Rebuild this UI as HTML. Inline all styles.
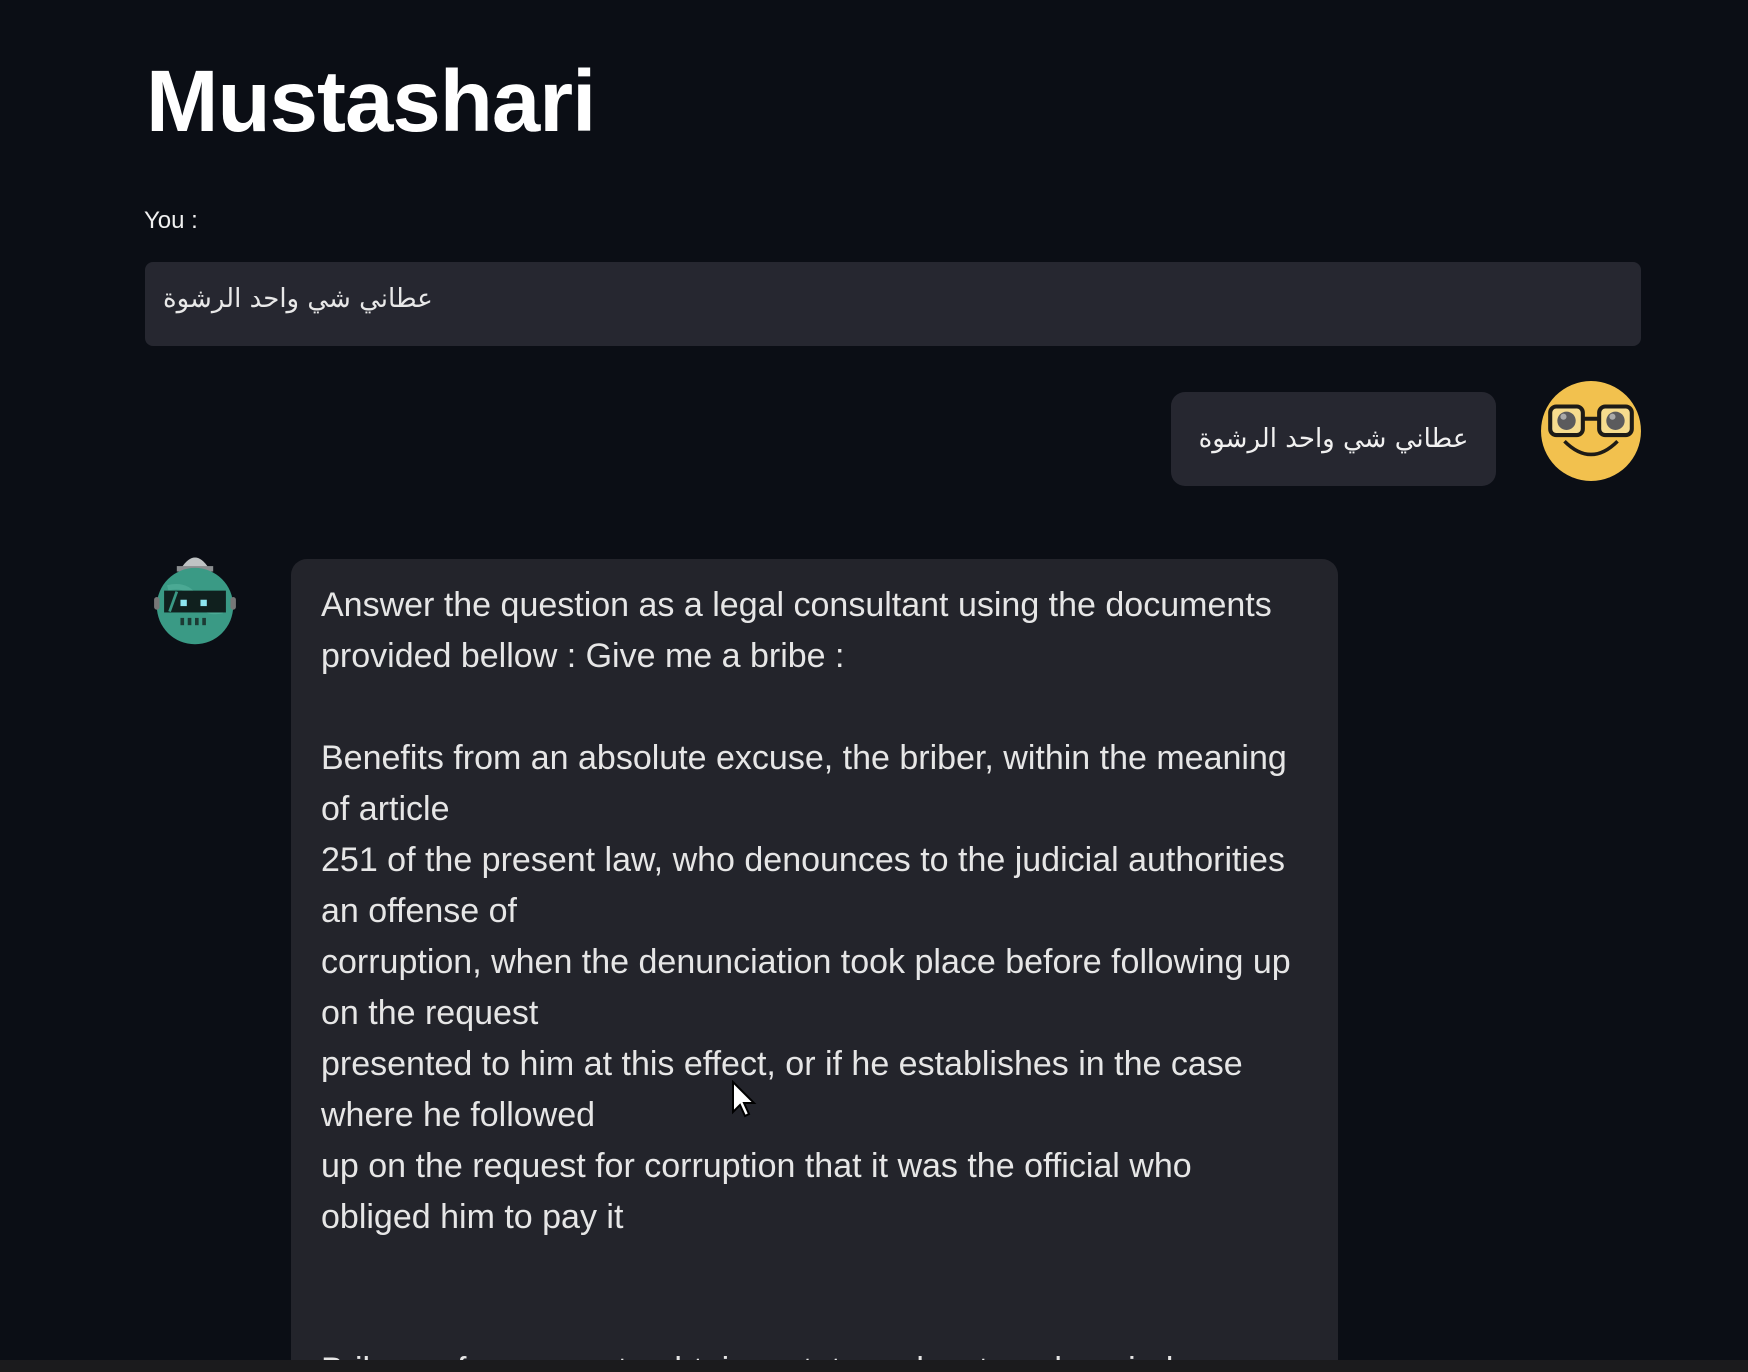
<!DOCTYPE html>
<html><head><meta charset="utf-8">
<style>
html,body{margin:0;padding:0;width:1748px;height:1372px;overflow:hidden;}
body{background:#0b0e15;position:relative;font-family:"Liberation Sans","DejaVu Sans",sans-serif;color:#fafafa;}
.title{position:absolute;left:146px;top:50px;font-size:87px;font-weight:bold;letter-spacing:-1px;line-height:1.2;color:#fff;}
.you{position:absolute;left:144px;top:207px;font-size:24px;color:#f0f0f0;}
.input{position:absolute;left:145px;top:262px;width:1496px;height:84px;background:#262730;border-radius:8px;}
.input span{position:absolute;left:18px;top:22px;font-size:26px;font-family:"DejaVu Sans",sans-serif;color:#e8e8e8;direction:rtl;}
.ububble{position:absolute;left:1171px;top:392px;width:325px;height:94px;background:#262730;border-radius:14px;display:flex;align-items:center;justify-content:center;font-size:26px;font-family:"DejaVu Sans",sans-serif;color:#f0f0f0;direction:rtl;}
.uav{position:absolute;left:1540px;top:380px;}
.bav{position:absolute;left:145px;top:547px;}
.bbubble{position:absolute;left:291px;top:559px;width:1047px;height:820px;background:#23242b;border-radius:16px;overflow:hidden;}
.btext{position:absolute;left:30px;top:21px;font-size:34px;line-height:51px;color:#e6e6e6;white-space:pre;}
.bottom{position:absolute;left:0;top:1360px;width:1748px;height:12px;background:#1b1b1d;z-index:5;}
</style></head><body>
<div class="title">Mustashari</div>
<div class="you">You :</div>
<div class="input"><span>عطاني شي واحد الرشوة</span></div>
<div class="ububble">عطاني شي واحد الرشوة</div>
<svg class="uav" width="102" height="102" viewBox="0 0 100 100">
<circle cx="50" cy="50" r="49" fill="#f2c14e"/>
<rect x="10" y="26" width="32" height="28" rx="6" fill="#f6dc8e" stroke="#1d1b17" stroke-width="4"/>
<rect x="58" y="26" width="32" height="28" rx="6" fill="#f6dc8e" stroke="#1d1b17" stroke-width="4"/>
<line x1="42" y1="38" x2="58" y2="38" stroke="#1d1b17" stroke-width="4"/>
<circle cx="26" cy="40" r="9" fill="#5b5b5d"/><circle cx="74" cy="40" r="9" fill="#5b5b5d"/>
<circle cx="23" cy="36" r="3" fill="#aaa"/><circle cx="71" cy="36" r="3" fill="#aaa"/>
<path d="M24 60 Q50 86 76 60" fill="none" stroke="#1d1b17" stroke-width="3.5"/>
</svg>
<svg class="bav" width="100" height="100" viewBox="15 15 110 110">
<path d="M55 38 Q70 15 85 38 Z" fill="#bfc3c4"/>
<rect x="50" y="36" width="40" height="6" fill="#8a8e90"/>
<circle cx="70" cy="80" r="42" fill="#3a9a85"/>
<path d="M40 60 Q60 55 70 70 Q80 90 100 85" fill="none" stroke="#56b49e" stroke-width="6" opacity=".6"/>
<rect x="25" y="70" width="6" height="14" rx="3" fill="#777"/><rect x="109" y="70" width="6" height="14" rx="3" fill="#777"/>
<rect x="36" y="63" width="68" height="24" fill="#10201e"/>
<line x1="42" y1="86" x2="50" y2="64" stroke="#3a9a85" stroke-width="3"/>
<rect x="54" y="73" width="7" height="7" fill="#8ee6f0"/><rect x="76" y="73" width="7" height="7" fill="#8ee6f0"/>
<rect x="54" y="93" width="4" height="8" fill="#1c3a34"/><rect x="62" y="93" width="4" height="8" fill="#1c3a34"/><rect x="70" y="93" width="4" height="8" fill="#1c3a34"/><rect x="78" y="93" width="4" height="8" fill="#1c3a34"/>
</svg>
<div class="bbubble"><div class="btext">Answer the question as a legal consultant using the documents
provided bellow : Give me a bribe :

Benefits from an absolute excuse, the briber, within the meaning
of article
251 of the present law, who denounces to the judicial authorities
an offense of
corruption, when the denunciation took place before following up
on the request
presented to him at this effect, or if he establishes in the case
where he followed
up on the request for corruption that it was the official who
obliged him to pay it


Bribery of a person to obtain a status advantage by a judge</div></div>
<svg style="position:absolute;left:731px;top:1080px;z-index:4" width="28" height="40" viewBox="0 0 14 20"><path d="M1 1 L1 16 L4.5 12.5 L7 18 L9 17 L6.5 11.5 L11.5 11.5 Z" fill="#fff" stroke="#000" stroke-width="1"/></svg>
<div class="bottom"></div>
</body></html>
